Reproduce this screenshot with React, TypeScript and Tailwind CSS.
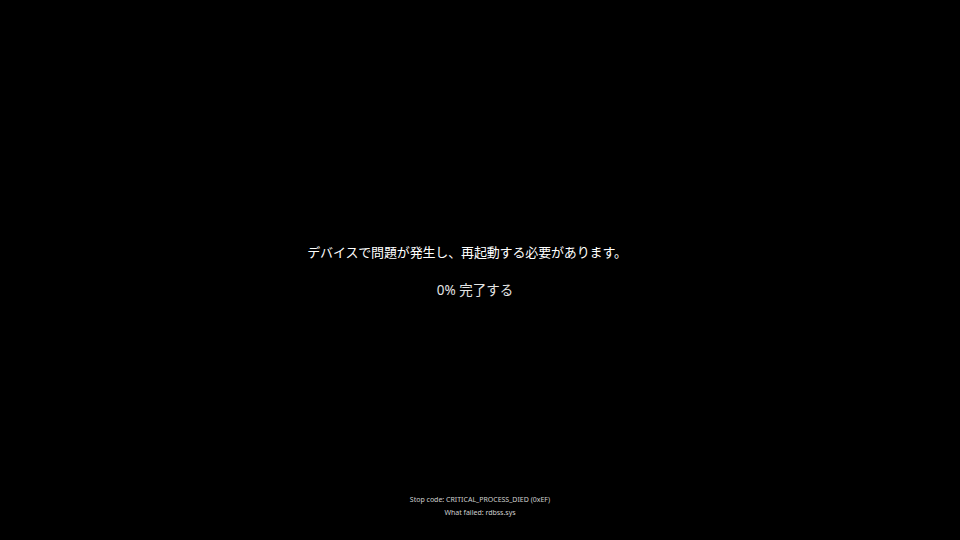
export default function App() {
  return (
    <div
      className="w-[960px] h-[540px] bg-black text-white flex flex-col items-center overflow-hidden"
      style={{ fontFamily: '"Noto Sans", "Noto Sans CJK JP", sans-serif' }}
    >
      {/* main message */}
      <div className="pt-[241px] flex flex-col items-center">
        <p className="text-[13px] leading-[22px] tracking-[-0.15px] mr-[26px]">
          デバイスで問題が発生し、再起動する必要があります。
        </p>
        <p className="mt-[16px] text-[13.5px] leading-[22px] text-[#e5e5e5] ml-[-10px]">
          0% 完了する
        </p>
      </div>

      {/* stop code */}
      <div className="mt-auto mb-[21px] flex flex-col items-center text-[7px] leading-[13px] text-[#d0d0d0]">
        <p>Stop code: CRITICAL_PROCESS_DIED (0xEF)</p>
        <p>What failed: rdbss.sys</p>
      </div>
    </div>
  );
}
